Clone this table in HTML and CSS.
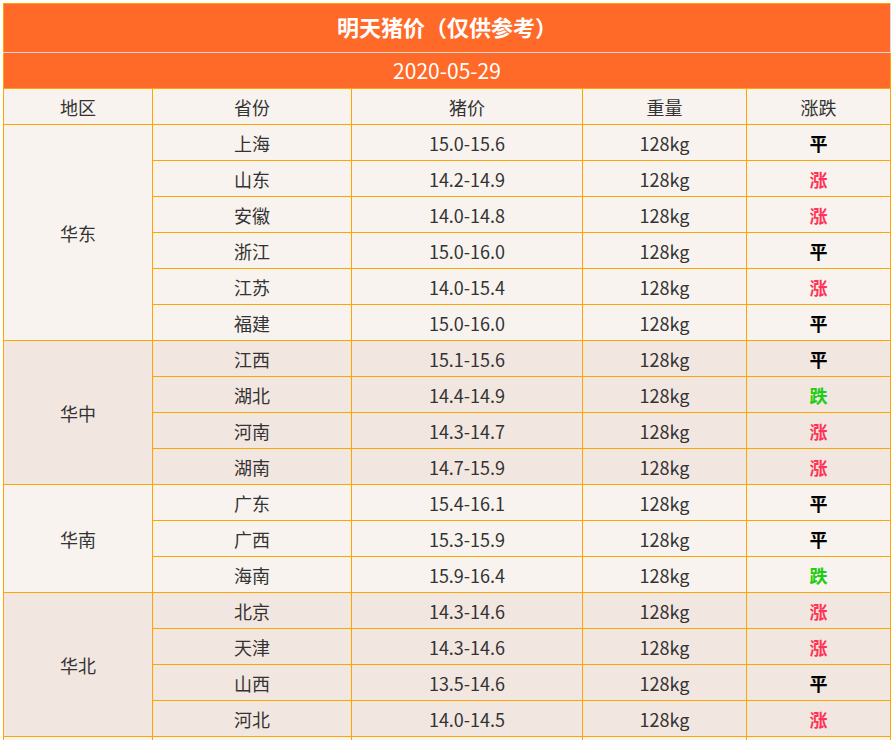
FILE: index.html
```html
<!DOCTYPE html>
<html lang="zh">
<head>
<meta charset="utf-8">
<title>明天猪价</title>
<link rel="stylesheet" href="styles.css">
</head>
<body>
<table class="price-table">
  <colgroup>
    <col class="c-region"><col class="c-prov"><col class="c-price"><col class="c-weight"><col class="c-trend">
  </colgroup>
  <tr class="title-row"><th colspan="5">明天猪价（仅供参考）</th></tr>
  <tr class="date-row"><th colspan="5">2020-05-29</th></tr>
  <tr class="head-row"><th>地区</th><th>省份</th><th>猪价</th><th>重量</th><th>涨跌</th></tr>

  <tr class="g-light"><td rowspan="6">华东</td><td>上海</td><td>15.0-15.6</td><td>128kg</td><td class="flat">平</td></tr>
  <tr class="g-light"><td>山东</td><td>14.2-14.9</td><td>128kg</td><td class="up">涨</td></tr>
  <tr class="g-light"><td>安徽</td><td>14.0-14.8</td><td>128kg</td><td class="up">涨</td></tr>
  <tr class="g-light"><td>浙江</td><td>15.0-16.0</td><td>128kg</td><td class="flat">平</td></tr>
  <tr class="g-light"><td>江苏</td><td>14.0-15.4</td><td>128kg</td><td class="up">涨</td></tr>
  <tr class="g-light"><td>福建</td><td>15.0-16.0</td><td>128kg</td><td class="flat">平</td></tr>

  <tr class="g-dark"><td rowspan="4">华中</td><td>江西</td><td>15.1-15.6</td><td>128kg</td><td class="flat">平</td></tr>
  <tr class="g-dark"><td>湖北</td><td>14.4-14.9</td><td>128kg</td><td class="down">跌</td></tr>
  <tr class="g-dark"><td>河南</td><td>14.3-14.7</td><td>128kg</td><td class="up">涨</td></tr>
  <tr class="g-dark"><td>湖南</td><td>14.7-15.9</td><td>128kg</td><td class="up">涨</td></tr>

  <tr class="g-light"><td rowspan="3">华南</td><td>广东</td><td>15.4-16.1</td><td>128kg</td><td class="flat">平</td></tr>
  <tr class="g-light"><td>广西</td><td>15.3-15.9</td><td>128kg</td><td class="flat">平</td></tr>
  <tr class="g-light"><td>海南</td><td>15.9-16.4</td><td>128kg</td><td class="down">跌</td></tr>

  <tr class="g-dark"><td rowspan="4">华北</td><td>北京</td><td>14.3-14.6</td><td>128kg</td><td class="up">涨</td></tr>
  <tr class="g-dark"><td>天津</td><td>14.3-14.6</td><td>128kg</td><td class="up">涨</td></tr>
  <tr class="g-dark"><td>山西</td><td>13.5-14.6</td><td>128kg</td><td class="flat">平</td></tr>
  <tr class="g-dark"><td>河北</td><td>14.0-14.5</td><td>128kg</td><td class="up">涨</td></tr>

  <tr class="g-light"><td rowspan="3">东北</td><td>辽宁</td><td>14.5-15.0</td><td>128kg</td><td class="flat">平</td></tr>
  <tr class="g-light"><td>吉林</td><td>14.2-14.8</td><td>128kg</td><td class="flat">平</td></tr>
  <tr class="g-light"><td>黑龙江</td><td>14.0-14.6</td><td>128kg</td><td class="up">涨</td></tr>
</table>
</body>
</html>
```

FILE: styles.css
```css
html, body {
  margin: 0;
  padding: 0;
  background: #ffffff;
}
body {
  padding: 3px;
  font-family: "Noto Sans CJK SC", "Noto Sans", sans-serif;
  color: #333333;
}
.price-table {
  width: 888px;
  table-layout: fixed;
  border-collapse: collapse;
  border: 1px solid #FFA500;
  font-size: 18px;
}
.c-region { width: 149px; }
.c-prov { width: 199px; }
.c-price { width: 231px; }
.c-weight { width: 164px; }
.c-trend { width: 144px; }

.price-table th,
.price-table td {
  border: 1px solid #FFA500;
  padding: 0;
  text-align: center;
  vertical-align: middle;
  font-weight: normal;
  height: 35px;
  line-height: 20px;
}
.title-row th {
  height: 44px;
  padding-bottom: 4px;
  background: #FF6A28;
  color: #ffffff;
  font-weight: bold;
  font-size: 22px;
  border-bottom: 1px solid #d9d9d9;
  border-right-color: #d9d9d9;
}
.date-row th {
  height: 34px;
  padding-bottom: 1px;
  background: #FF6A28;
  color: #ffffff;
  font-size: 21px;
}
.head-row th {
  background: #F8F3EF;
  color: #333333;
}
.g-light td { background: #F8F3EF; }
.g-dark td { background: #F2E6E1; }
.price-table td.up { color: #FF3355; font-weight: bold; }
.price-table td.down { color: #22CC11; font-weight: bold; }
.price-table td.flat { color: #000000; font-weight: bold; }
```
